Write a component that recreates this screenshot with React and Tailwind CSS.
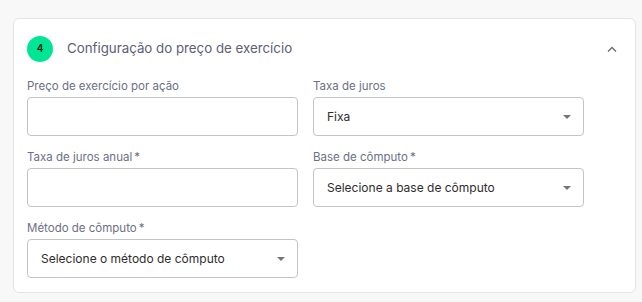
import React from 'react';

const font = { fontFamily: 'Inter, "Noto Sans", sans-serif' };

const Caret = () => (
  <svg width="8" height="4" viewBox="0 0 8 4" className="shrink-0">
    <path d="M0 0h8L4 4z" fill="#757575" />
  </svg>
);

const Field = ({ label, required, select, value }) => (
  <div className="flex flex-col">
    <label className="text-[11.5px] leading-[16px] mb-[3px] text-[#6b7085]">
      {label}
      {required && <span className="ml-[2px]">*</span>}
    </label>
    {select ? (
      <div className="h-[39px] rounded-[4px] border border-[#c4c4c4] bg-white flex items-center justify-between pl-[13px] pr-[12px]">
        <span className="text-[12px] text-[#2d2d2d]">{value}</span>
        <Caret />
      </div>
    ) : (
      <div className="h-[39px] rounded-[4px] border border-[#c4c4c4] bg-white" />
    )}
  </div>
);

export default function App() {
  return (
    <div className="w-[642px] h-[302px] bg-[#f8f8f9] pt-[18px] pl-[13px]" style={font}>
      <div className="w-[623px] rounded-[6px] border border-[#e3e3e8] bg-white pt-[16px] pb-[14px] pl-[13px] pr-[18px]">
        <div className="flex items-center h-[27px]">
          <div className="w-[26px] h-[26px] rounded-full bg-[#00e695] flex items-center justify-center text-[10px] font-semibold text-[#111]">
            4
          </div>
          <h2 className="ml-[14px] text-[13.3px] text-[#5c6074] flex-1">Configuração do preço de exercício</h2>
          <svg width="10" height="6" viewBox="0 0 10 6" fill="none">
            <path d="M1 5.5L5 1.5L9 5.5" stroke="#6b6b6b" strokeWidth="1.3" />
          </svg>
        </div>

        <div className="grid grid-cols-[271px_271px] gap-x-[15px] gap-y-[13px] mt-[16px]">
          <Field label="Preço de exercício por ação" />
          <Field label="Taxa de juros" select value="Fixa" />
          <Field label="Taxa de juros anual" required />
          <Field label="Base de cômputo" required select value="Selecione a base de cômputo" />
          <Field label="Método de cômputo" required select value="Selecione o método de cômputo" />
        </div>
      </div>
    </div>
  );
}
